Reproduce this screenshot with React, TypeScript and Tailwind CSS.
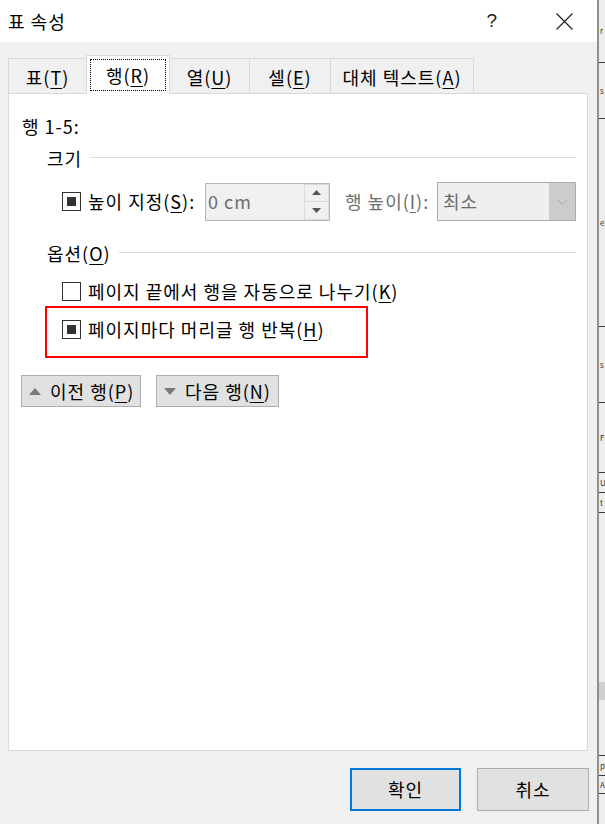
import React from "react";

function U({ c }: { c: string }) {
  return <span className="underline decoration-1 underline-offset-[3px]">{c}</span>;
}

function Checkbox({ checked }: { checked: boolean }) {
  return (
    <div className="w-[19px] h-[19px] border border-[#333333] bg-white flex items-center justify-center shrink-0">
      {checked && <div className="w-[9px] h-[9px] bg-[#333333]" />}
    </div>
  );
}

function Tab({ label, m, w, active }: { label: string; m: string; w: string; active?: boolean }) {
  return (
    <div
      className={
        active
          ? `${w} h-[39px] -ml-[1px] -mb-[1px] relative z-10 bg-white border border-b-0 border-[#d9d9d9] flex items-center justify-center px-[3px] pt-[3px] pb-[3px]`
          : `${w} h-[35px] -ml-[1px] bg-[#f0f0f0] border border-b-0 border-[#d9d9d9] flex items-center justify-center pt-[2px]`
      }
    >
      {active ? (
        <div className="w-full h-full border border-dotted border-black flex items-center justify-center">
          <span>
            {label}(<U c={m} />)
          </span>
        </div>
      ) : (
        <span>
          {label}(<U c={m} />)
        </span>
      )}
    </div>
  );
}

function GroupHeader({ children }: { children: React.ReactNode }) {
  return (
    <div className="flex items-center h-[24px] ml-[38px] mr-[11px]">
      <span className="leading-[24px]">{children}</span>
      <div className="flex-1 h-px bg-[#dcdcdc] ml-[8px] -mt-[2px]" />
    </div>
  );
}

function Strip() {
  const segs: { h: number; line?: boolean; t?: string; bg?: string }[] = [
    { h: 62, t: "r" },
    { h: 1, line: true },
    { h: 55, t: "s" },
    { h: 1, line: true },
    { h: 207, t: "e" },
    { h: 1, line: true },
    { h: 75, t: "s" },
    { h: 1, line: true },
    { h: 69, t: "F" },
    { h: 1, line: true },
    { h: 19, t: "U" },
    { h: 1, line: true },
    { h: 19, t: "t" },
    { h: 1, line: true },
    { h: 169 },
    { h: 18, bg: "bg-[#cfcfcf]" },
    { h: 55 },
    { h: 1, line: true },
    { h: 19, t: "p" },
    { h: 1, line: true },
    { h: 17, t: "A" },
    { h: 1, line: true },
    { h: 30 },
  ];
  return (
    <div className="w-[8px] h-[824px] border-l-2 border-[#8f8f8f] bg-[#ededed] overflow-hidden flex flex-col shrink-0 tracking-normal">
      {segs.map((s, i) => (
        <div
          key={i}
          style={{ height: s.h }}
          className={
            s.line
              ? "bg-[#3a3a3a] shrink-0"
              : `${s.bg ?? ""} shrink-0 flex items-center text-[8px] leading-none text-[#333] pl-[1px] overflow-hidden`
          }
        >
          {s.t ?? ""}
        </div>
      ))}
    </div>
  );
}

export default function App() {
  return (
    <div className="w-[605px] h-[824px] flex overflow-hidden font-['Noto_Sans_CJK_KR',sans-serif] text-[18px] tracking-[1px] text-black">
      <div className="w-[597px] h-[824px] bg-[#f0f0f0] flex flex-col shrink-0">
        {/* Title bar */}
        <div className="h-[42px] bg-white flex items-center shrink-0">
          <span className="ml-[8px]">표 속성</span>
          <div className="flex-1" />
          <span className="text-[19px] text-[#222] mr-[58px] font-['Liberation_Sans',sans-serif]">?</span>
          <svg width="17" height="17" viewBox="0 0 17 17" className="mr-[24px]">
            <path d="M0.5 0.5 L16.5 16.5 M16.5 0.5 L0.5 16.5" stroke="#222" strokeWidth="1.2" />
          </svg>
        </div>

        {/* Tabs */}
        <div className="flex items-end ml-[9px] mt-[13px] h-[38px] shrink-0">
          <Tab label="표" m="T" w="w-[79px]" />
          <Tab label="행" m="R" w="w-[84px]" active />
          <Tab label="열" m="U" w="w-[81px]" />
          <Tab label="셀" m="E" w="w-[82px]" />
          <Tab label="대체 텍스트" m="A" w="w-[144px]" />
        </div>

        {/* Panel */}
        <div className="ml-[8px] w-[580px] h-[658px] bg-white border border-[#d9d9d9] flex flex-col shrink-0">
          <div className="mt-[20px] ml-[13px] h-[24px] leading-[24px]">행 1-5:</div>

          <div className="mt-[8px]">
            <GroupHeader>크기</GroupHeader>
          </div>

          {/* Size row */}
          <div className="mt-[12px] h-[39px] flex items-center ml-[53px]">
            <Checkbox checked />
            <span className="ml-[7px] w-[117px] whitespace-nowrap">
              높이 지정(<U c="S" />):
            </span>
            <div className="w-[125px] h-[38px] border border-[#b9b9b9] bg-[#f0f0f0] flex items-stretch">
              <div className="flex-1 flex items-center pl-[2px] text-[#6d6d6d]">0 cm</div>
              <div className="w-[25px] flex flex-col">
                <div className="flex-1 border border-[#dadada] flex items-center justify-center bg-[#f0f0f0]">
                  <svg width="9" height="5" viewBox="0 0 9 5">
                    <path d="M0 5 L4.5 0 L9 5 Z" fill="#555" />
                  </svg>
                </div>
                <div className="flex-1 border border-t-0 border-[#dadada] flex items-center justify-center bg-[#f0f0f0]">
                  <svg width="9" height="5" viewBox="0 0 9 5">
                    <path d="M0 0 L9 0 L4.5 5 Z" fill="#555" />
                  </svg>
                </div>
              </div>
            </div>
            <span className="ml-[15px] w-[92px] text-[#6d6d6d] whitespace-nowrap">
              행 높이(<U c="I" />):
            </span>
            <div className="w-[139px] h-[39px] border border-[#adadad] bg-[#efefef] flex items-stretch">
              <div className="flex-1 flex items-center pl-[5px] text-[#6d6d6d]">최소</div>
              <div className="w-[26px] bg-[#cccccc] flex items-center justify-center">
                <svg width="11" height="6" viewBox="0 0 11 6">
                  <path d="M0.5 0.5 L5.5 5.5 L10.5 0.5" stroke="#a8a8a8" strokeWidth="1" fill="none" />
                </svg>
              </div>
            </div>
          </div>

          <div className="mt-[20px]">
            <GroupHeader>
              옵션(<U c="O" />)
            </GroupHeader>
          </div>

          <div className="mt-[14px] h-[24px] flex items-center ml-[53px]">
            <Checkbox checked={false} />
            <span className="ml-[7px] whitespace-nowrap">
              페이지 끝에서 행을 자동으로 나누기(<U c="K" />)
            </span>
          </div>

          <div className="mt-[3px] ml-[36px] w-[323px] h-[52px] border-2 border-[#ff0000] flex items-start pt-[10px] pl-[15px]">
            <div className="flex items-center h-[22px]">
              <Checkbox checked />
              <span className="ml-[7px] whitespace-nowrap">
                페이지마다 머리글 행 반복(<U c="H" />)
              </span>
            </div>
          </div>

          <div className="mt-[17px] ml-[12px] flex gap-[15px]">
            <div className="w-[120px] h-[32px] bg-[#e1e1e1] border border-[#adadad] flex items-center pl-[7px]">
              <svg width="12" height="7" viewBox="0 0 12 7">
                <path d="M0 7 L6 0 L12 7 Z" fill="#7a7a7a" />
              </svg>
              <span className="ml-[9px] whitespace-nowrap">
                이전 행(<U c="P" />)
              </span>
            </div>
            <div className="w-[123px] h-[32px] bg-[#e1e1e1] border border-[#adadad] flex items-center pl-[7px]">
              <svg width="12" height="7" viewBox="0 0 12 7">
                <path d="M0 0 L12 0 L6 7 Z" fill="#7a7a7a" />
              </svg>
              <span className="ml-[9px] whitespace-nowrap">
                다음 행(<U c="N" />)
              </span>
            </div>
          </div>
        </div>

        {/* Bottom buttons */}
        <div className="mt-[17px] flex ml-[350px] gap-[16px]">
          <div className="w-[111px] h-[43px] bg-[#e1e1e1] border-2 border-[#0078d7] flex items-center justify-center">
            확인
          </div>
          <div className="w-[112px] h-[43px] bg-[#e1e1e1] border border-[#adadad] flex items-center justify-center">
            취소
          </div>
        </div>
      </div>
      <Strip />
    </div>
  );
}
